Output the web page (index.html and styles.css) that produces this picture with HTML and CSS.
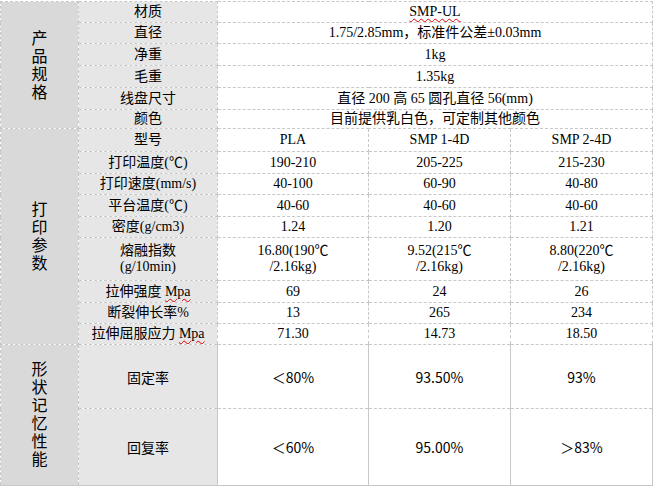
FILE: index.html
```html
<!DOCTYPE html>
<html lang="zh">
<head>
<meta charset="utf-8">
<title>SMP-UL</title>
<link rel="stylesheet" href="styles.css">
</head>
<body>
<table class="spec">
  <colgroup>
    <col class="c1"><col class="c2"><col class="c3"><col class="c4"><col class="c5">
  </colgroup>
  <tbody>
    <tr class="h21">
      <td class="sec" rowspan="6"><span class="vtext">产品规格</span></td>
      <td class="lab">材质</td>
      <td class="val" colspan="3"><span class="spell">SMP-UL</span></td>
    </tr>
    <tr class="h21"><td class="lab">直径</td><td class="val" colspan="3">1.75/2.85mm，标准件公差±0.03mm</td></tr>
    <tr class="h22"><td class="lab">净重</td><td class="val" colspan="3">1kg</td></tr>
    <tr class="h22"><td class="lab">毛重</td><td class="val" colspan="3">1.35kg</td></tr>
    <tr class="h22"><td class="lab">线盘尺寸</td><td class="val" colspan="3">直径 200 高 65 圆孔直径 56(mm)</td></tr>
    <tr class="h19"><td class="lab">颜色</td><td class="val" colspan="3">目前提供乳白色，可定制其他颜色</td></tr>

    <tr class="h23">
      <td class="sec" rowspan="9"><span class="vtext">打印参数</span></td>
      <td class="lab">型号</td><td class="val">PLA</td><td class="val">SMP 1-4D</td><td class="val">SMP 2-4D</td>
    </tr>
    <tr class="h22"><td class="lab">打印温度(℃)</td><td class="val">190-210</td><td class="val">205-225</td><td class="val">215-230</td></tr>
    <tr class="h21"><td class="lab">打印速度(mm/s)</td><td class="val">40-100</td><td class="val">60-90</td><td class="val">40-80</td></tr>
    <tr class="h22"><td class="lab">平台温度(℃)</td><td class="val">40-60</td><td class="val">40-60</td><td class="val">40-60</td></tr>
    <tr class="h21"><td class="lab">密度(g/cm3)</td><td class="val">1.24</td><td class="val">1.20</td><td class="val">1.21</td></tr>
    <tr class="h43">
      <td class="lab two">熔融指数<br>(g/10min)</td>
      <td class="val two">16.80(190℃<br>/2.16kg)</td>
      <td class="val two">9.52(215℃<br>/2.16kg)</td>
      <td class="val two">8.80(220℃<br>/2.16kg)</td>
    </tr>
    <tr class="h22"><td class="lab">拉伸强度 <span class="spell">Mpa</span></td><td class="val">69</td><td class="val">24</td><td class="val">26</td></tr>
    <tr class="h21"><td class="lab">断裂伸长率%</td><td class="val">13</td><td class="val">265</td><td class="val">234</td></tr>
    <tr class="h21"><td class="lab">拉伸屈服应力 <span class="spell">Mpa</span></td><td class="val">71.30</td><td class="val">14.73</td><td class="val">18.50</td></tr>

    <tr class="h64">
      <td class="sec sans last" rowspan="2"><span class="vtext">形状记忆性能</span></td>
      <td class="lab sans">固定率</td><td class="val sans solid">＜80%</td><td class="val sans solid">93.50%</td><td class="val sans solid">93%</td>
    </tr>
    <tr class="h77 last">
      <td class="lab sans">回复率</td><td class="val sans solid">＜60%</td><td class="val sans solid">95.00%</td><td class="val sans solid">＞83%</td>
    </tr>
  </tbody>
</table>
</body>
</html>
```

FILE: styles.css
```css
html, body {
  margin: 0;
  padding: 0;
  background: #ffffff;
}

body {
  padding-top: 1px;
  font-family: "Liberation Serif", "Noto Sans CJK SC", serif;
  font-size: 14px;
  color: #000000;
}

.spec {
  border-collapse: collapse;
  table-layout: fixed;
  width: 652px;
}

.c1 { width: 78px; }
.c2 { width: 139px; }
.c3 { width: 151px; }
.c4 { width: 142px; }
.c5 { width: 142px; }

.spec td {
  border: 1px dashed #c8c8c8;
  padding: 0;
  text-align: center;
  vertical-align: middle;
  line-height: 16px;
  white-space: nowrap;
  overflow: hidden;
}

.h19 { height: 19px; }
.h21 { height: 21px; }
.h22 { height: 22px; }
.h23 { height: 23px; }
.h43 { height: 43px; }
.h64 { height: 64px; }
.h77 { height: 77px; }

.sec {
  background: #d9d9d9;
  font-family: "Noto Sans CJK SC", sans-serif;
  font-size: 16px;
}

.vtext {
  display: inline-block;
  writing-mode: vertical-rl;
  text-orientation: upright;
  letter-spacing: 2px;
  line-height: 18px;
  padding-top: 2px;
}

.lab {
  background: #e6e6e6;
}

.val {
  background: #ffffff;
}

.two {
  line-height: 21px;
}

.sans {
  font-family: "Noto Sans CJK SC", sans-serif;
}

.lab.sans, .val.sans {
  font-size: 14px;
}

.spec td.solid {
  border-left-style: solid;
  border-right-style: solid;
}

.spec tr.last td,
.spec td.last {
  border-bottom: 2px solid #c8c8c8;
}

.spell {
  text-decoration: underline wavy #e00000;
  text-decoration-thickness: 1px;
  text-underline-offset: 2px;
}
```
